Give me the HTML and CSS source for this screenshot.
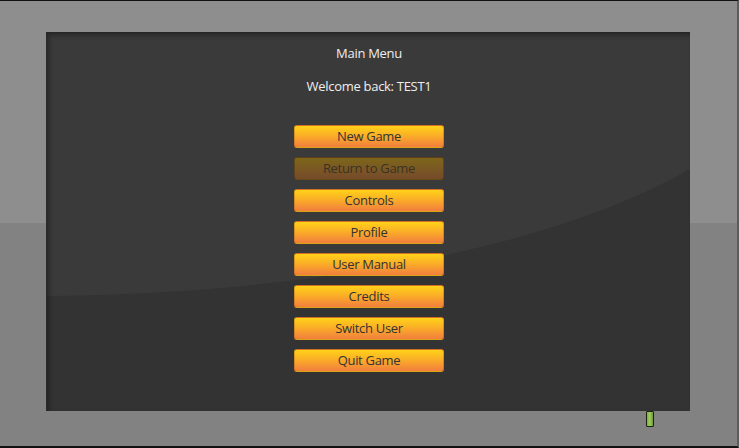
FILE: index.html
```html
<!DOCTYPE html>
<html>
<head>
<meta charset="utf-8">
<link rel="stylesheet" href="styles.css">
</head>
<body>
<div class="device">
  <div class="screen">
    <svg class="gloss" width="644" height="379" viewBox="0 0 644 379" aria-hidden="true">
      <path d="M0 264 C250 262 500 220 644 137 L644 379 L0 379 Z" fill="#333333"/>
    </svg>
    <div class="menu">
      <div class="title">Main Menu</div>
      <div class="welcome">Welcome back: TEST1</div>
      <div class="buttons">
        <div class="btn">New Game</div>
        <div class="btn disabled">Return to Game</div>
        <div class="btn">Controls</div>
        <div class="btn">Profile</div>
        <div class="btn">User Manual</div>
        <div class="btn">Credits</div>
        <div class="btn">Switch User</div>
        <div class="btn">Quit Game</div>
      </div>
    </div>
  </div>
  <div class="led"></div>
</div>
</body>
</html>
```

FILE: styles.css
```css
html, body {
  margin: 0;
  padding: 0;
  background: #000;
}

.device {
  box-sizing: border-box;
  width: 739px;
  height: 448px;
  border-top: 1px solid #111;
  border-bottom: 2px solid #111;
  border-right: 2px solid #5c5c5c;
  background: linear-gradient(to bottom, #8e8e8e 0, #8e8e8e 222px, #828282 222px, #828282 100%);
  padding: 31px 0 0 46px;
  display: flex;
  flex-direction: column;
}

.screen {
  position: relative;
  width: 644px;
  height: 379px;
  background: #3a3a3a;
  overflow: hidden;
}

.gloss {
  position: absolute;
  left: 0;
  top: 0;
  display: block;
}

.screen::after {
  content: "";
  position: absolute;
  inset: 0;
  pointer-events: none;
  box-shadow: inset 0 1px 0 #262626, inset 1px 0 0 #2a2a2a, inset 3px 3px 5px rgba(0, 0, 0, 0.35);
}

.menu {
  position: relative;
  display: flex;
  flex-direction: column;
  align-items: center;
  padding: 13px 0 0 2px;
  font-family: "Open Sans", "Liberation Sans", sans-serif;
  font-size: 13px;
  letter-spacing: -0.3px;
}

.title, .welcome {
  color: #eeeeee;
  line-height: 16px;
  height: 16px;
}

.welcome {
  margin-top: 17px;
}

.buttons {
  margin-top: 31px;
  display: flex;
  flex-direction: column;
  gap: 9px;
}

.btn {
  box-sizing: border-box;
  width: 150px;
  height: 23px;
  line-height: 21px;
  text-align: center;
  color: #333333;
  border: 1px solid rgba(150, 80, 10, 0.35);
  border-radius: 3px;
  background: linear-gradient(to bottom, #ffd217 0%, #fbb325 40%, #f27e3e 100%);
}

.btn.disabled {
  color: #3b3224;
  background: linear-gradient(to bottom, #7d661a 0%, #7a5a22 45%, #774a2b 100%);
  border-color: rgba(60, 40, 10, 0.4);
}

.led {
  box-sizing: border-box;
  width: 8px;
  height: 16px;
  margin-left: 600px;
  border: 1px solid #1c2410;
  border-radius: 1px;
  background: linear-gradient(to right, #7faa45 0%, #9fce5e 45%, #6d9a38 100%);
}
```
